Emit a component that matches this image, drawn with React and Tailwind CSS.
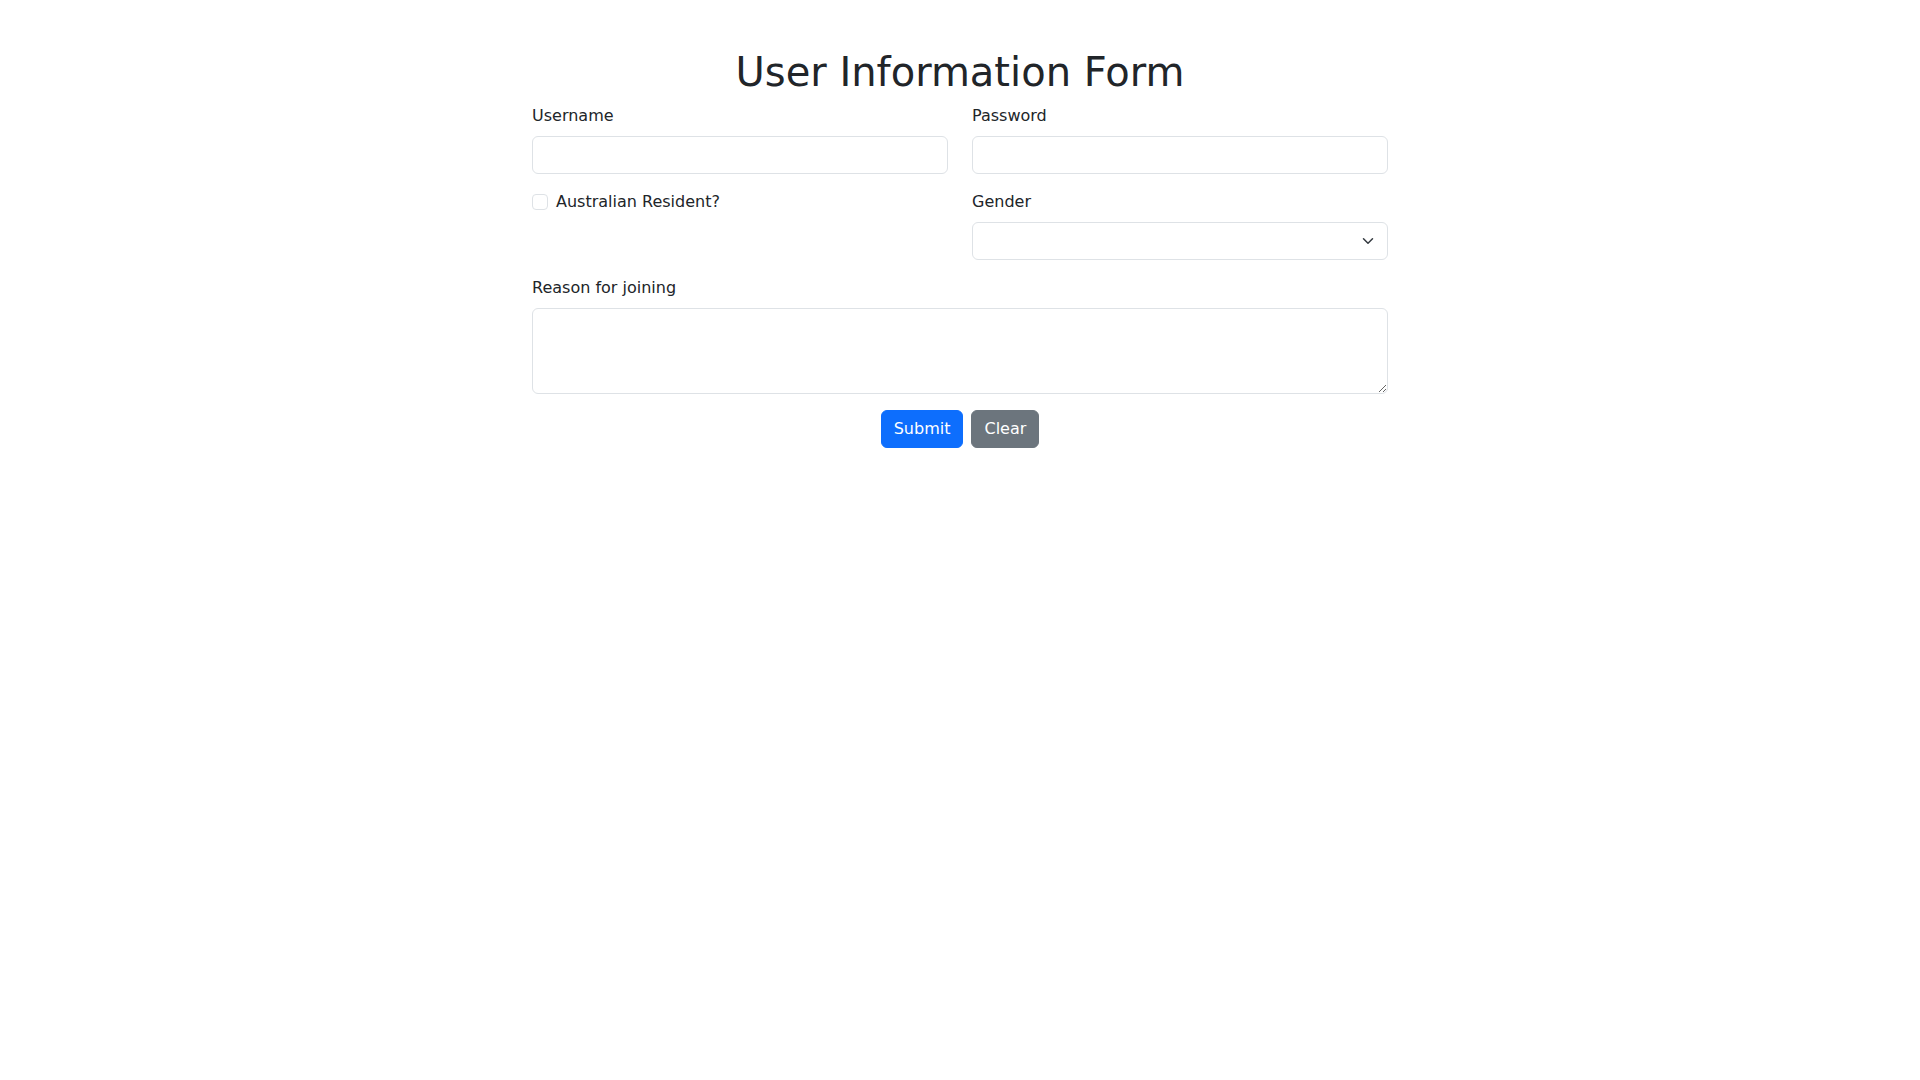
import React from "react";

export default function App() {
  return (
    <div className="min-h-screen bg-white text-[#212529] font-['DejaVu_Sans',sans-serif] text-base leading-6">
      <div className="mx-auto w-[856px] pt-12">
        <h1 className="text-center text-[40px] leading-[48px] font-normal mb-2">User Information Form</h1>
        <form onSubmit={(e) => e.preventDefault()}>
          <div className="grid grid-cols-2 gap-x-6 mb-4">
            <div>
              <label className="block mb-2">Username</label>
              <input type="text" className="block w-full h-[38px] px-3 border border-[#dee2e6] rounded-md bg-white outline-none" />
            </div>
            <div>
              <label className="block mb-2">Password</label>
              <input type="password" className="block w-full h-[38px] px-3 border border-[#dee2e6] rounded-md bg-white outline-none" />
            </div>
          </div>
          <div className="grid grid-cols-2 gap-x-6 mb-4">
            <div className="flex items-start min-h-6">
              <input type="checkbox" className="appearance-none mt-1 w-4 h-4 shrink-0 border border-[#dee2e6] rounded bg-white" />
              <label className="ml-2">Australian Resident?</label>
            </div>
            <div>
              <label className="block mb-2">Gender</label>
              <div className="relative h-[38px] border border-[#dee2e6] rounded-md bg-white">
                <svg className="absolute right-[11px] top-[12px]" width="16" height="12" viewBox="0 0 16 16">
                  <path d="M2 5l6 6 6-6" fill="none" stroke="#343a40" strokeWidth="2" strokeLinecap="round" strokeLinejoin="round" />
                </svg>
              </div>
            </div>
          </div>
          <div className="mb-4">
            <label className="block mb-2">Reason for joining</label>
            <textarea rows={3} className="block w-full h-[86px] px-3 py-1.5 border border-[#dee2e6] rounded-md bg-white outline-none" />
          </div>
          <div className="flex justify-center gap-2">
            <button type="submit" className="h-[38px] px-3 rounded-md bg-[#0d6efd] border border-[#0d6efd] text-white">Submit</button>
            <button type="button" className="h-[38px] px-3 rounded-md bg-[#6c757d] border border-[#6c757d] text-white">Clear</button>
          </div>
        </form>
      </div>
    </div>
  );
}
